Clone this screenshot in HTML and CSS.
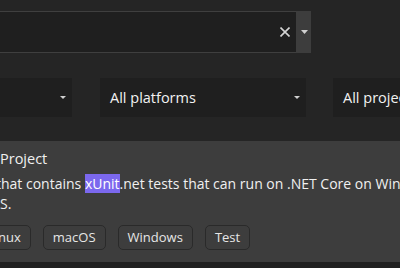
FILE: index.html
```html
<!DOCTYPE html>
<html>
<head>
<meta charset="utf-8">
<link rel="stylesheet" href="styles.css">
</head>
<body>
<div class="page">
  <div class="search">
    <div class="search-field">
      <svg class="clear" width="10" height="10" viewBox="0 0 10 10"><path d="M0.5 0.5 L9.5 9.5 M9.5 0.5 L0.5 9.5" stroke="#d4d4d4" stroke-width="1.6" fill="none"/></svg>
    </div>
    <div class="search-btn">
      <svg width="7" height="4" viewBox="0 0 7 4"><path d="M0 0 H7 L3.5 4 Z" fill="#d0d0d0"/></svg>
    </div>
  </div>
  <div class="filters">
    <div class="dd dd-lang">
      <span class="dd-text"></span>
      <svg width="6" height="3" viewBox="0 0 6 3"><path d="M0 0 H6 L3 3 Z" fill="#d0d0d0"/></svg>
    </div>
    <div class="dd dd-plat">
      <span class="dd-text">All platforms</span>
      <svg width="6" height="3" viewBox="0 0 6 3"><path d="M0 0 H6 L3 3 Z" fill="#d0d0d0"/></svg>
    </div>
    <div class="dd dd-proj">
      <span class="dd-text">All project types</span>
    </div>
  </div>
  <div class="result">
    <div class="title">Project</div>
    <div class="desc">
      <div class="line line-1">that contains <mark class="hl">xUnit</mark>.net tests that can run on .NET Core on Windows,</div>
      <div class="line">S.</div>
    </div>
    <div class="tags">
      <span class="tag tag-cut">Linux</span>
      <span class="tag">macOS</span>
      <span class="tag">Windows</span>
      <span class="tag">Test</span>
    </div>
  </div>
  <div class="footer"></div>
</div>
</body>
</html>
```
FILE: styles.css
```css
html, body {
  margin: 0;
  padding: 0;
  background: #252525;
}
.page {
  width: 400px;
  height: 268px;
  overflow: hidden;
  font-family: "Open Sans", "Noto Sans", sans-serif;
  color: #f0f0f0;
  display: flex;
  flex-direction: column;
}
.search {
  margin-top: 11px;
  display: flex;
  width: 311px;
  height: 42px;
  flex-shrink: 0;
}
.search-field {
  width: 296px;
  box-sizing: border-box;
  background: #1f1f1f;
  border-top: 1px solid #3f3f3f;
  border-bottom: 1px solid #3f3f3f;
  display: flex;
  align-items: center;
  justify-content: flex-end;
  padding-right: 6px;
}
.clear {
  display: block;
}
.search-btn {
  width: 15px;
  background: #3d3d3d;
  display: flex;
  align-items: center;
  justify-content: center;
}
.search-btn svg {
  display: block;
  margin-left: 1px;
}
.filters {
  margin-top: 25px;
  display: flex;
  gap: 28px;
  height: 39px;
  flex-shrink: 0;
}
.dd {
  background: #1f1f1f;
  display: flex;
  align-items: center;
  justify-content: space-between;
  box-sizing: border-box;
  padding: 0 6px 0 10px;
  flex-shrink: 0;
}
.dd svg {
  display: block;
}
.dd-lang { width: 72px; }
.dd-plat { width: 206px; }
.dd-proj { width: 200px; margin-left: -1px; justify-content: flex-start; }
.dd-text {
  font-size: 14.5px;
  color: #f2f2f2;
  white-space: nowrap;
}
.result {
  margin-top: 24px;
  height: 121px;
  flex-shrink: 0;
  background: #3d3d3d;
  padding-top: 8px;
  box-sizing: border-box;
}
.title {
  font-size: 14.5px;
  line-height: 20px;
  color: #f0f0f0;
  white-space: nowrap;
}
.desc {
  margin-top: 5px;
  font-size: 14px;
  line-height: 20px;
  color: #f0f0f0;
}
.line {
  white-space: nowrap;
}
.line-1 {
  margin-left: -4px;
}
.hl {
  background: #7b68ee;
  color: #ffffff;
  padding: 0;
}
.tags {
  margin-top: 11px;
  display: flex;
  gap: 12px;
  margin-left: -22px;
}
.tag {
  box-sizing: border-box;
  height: 25px;
  border: 1px solid #2a2a2a;
  border-radius: 5px;
  font-size: 13px;
  line-height: 23px;
  color: #e6e6e6;
  padding: 0 9px;
  white-space: nowrap;
  flex-shrink: 0;
}
.footer {
  flex: 1;
  background: #202020;
}
```
